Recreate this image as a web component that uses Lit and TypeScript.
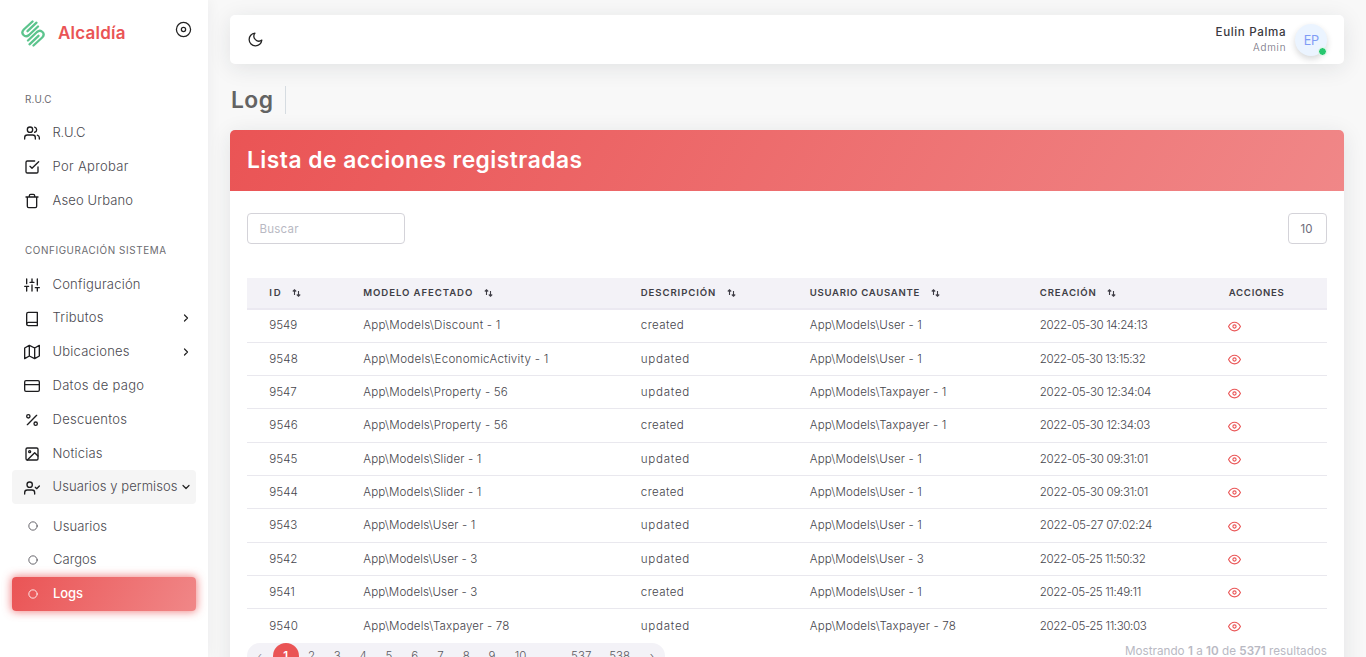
import { LitElement, html, svg, css, nothing } from "lit";
import { customElement, property } from "lit/decorators.js";

/** Single line of text whose tracking is adjusted to fill a given width. */
@customElement("fit-text")
class FitText extends LitElement {
  @property({ type: Number }) w = 0;
  static styles = css`
    :host { display: inline-block; white-space: nowrap; }
  `;
  render() {
    return html`<slot></slot>`;
  }
  firstUpdated() {
    const n = (this.textContent || "").trim().length;
    if (!this.w || n < 2) return;
    this.style.letterSpacing = "0px";
    const natural = this.getBoundingClientRect().width;
    this.style.letterSpacing = `${(this.w - natural) / (n - 1)}px`;
    this.style.width = `${this.w}px`;
  }
}

const ICONS: Record<string, unknown> = {
  users: svg`<path d="M17 21v-2a4 4 0 0 0-4-4H5a4 4 0 0 0-4 4v2"/><circle cx="9" cy="7" r="4"/><path d="M23 21v-2a4 4 0 0 0-3-3.87M16 3.13a4 4 0 0 1 0 7.75"/>`,
  check: svg`<path d="M9 11l3 3L22 4"/><path d="M21 12v7a2 2 0 0 1-2 2H5a2 2 0 0 1-2-2V5a2 2 0 0 1 2-2h11"/>`,
  trash: svg`<path d="M3 6h18M19 6v14a2 2 0 0 1-2 2H7a2 2 0 0 1-2-2V6m3 0V4a2 2 0 0 1 2-2h4a2 2 0 0 1 2 2v2"/>`,
  sliders: svg`<path d="M4 21v-7M4 10V3M12 21v-9M12 8V3M20 21v-5M20 12V3M1 14h6M9 8h6M17 16h6"/>`,
  book: svg`<path d="M4 19.5A2.5 2.5 0 0 1 6.5 17H20"/><path d="M6.5 2H20v20H6.5A2.5 2.5 0 0 1 4 19.5v-15A2.5 2.5 0 0 1 6.5 2z"/>`,
  map: svg`<path d="M1 6v16l7-4 8 4 7-4V2l-7 4-8-4-7 4zM8 2v16M16 6v16"/>`,
  card: svg`<rect x="1" y="4" width="22" height="16" rx="2"/><path d="M1 10h22"/>`,
  percent: svg`<path d="M19 5L5 19"/><circle cx="6.5" cy="6.5" r="2.5"/><circle cx="17.5" cy="17.5" r="2.5"/>`,
  image: svg`<rect x="3" y="3" width="18" height="18" rx="2"/><circle cx="8.5" cy="8.5" r="1.5"/><path d="M21 15l-5-5L5 21"/>`,
  usercheck: svg`<path d="M16 21v-2a4 4 0 0 0-4-4H5a4 4 0 0 0-4 4v2"/><circle cx="8.5" cy="7" r="4"/><path d="M17 11l2 2 4-4"/>`,
  circle: svg`<circle cx="12" cy="12" r="10"/>`,
  disc: svg`<circle cx="12" cy="12" r="10"/><circle cx="12" cy="12" r="3"/>`,
  moon: svg`<path d="M21 12.79A9 9 0 1 1 11.21 3 7 7 0 0 0 21 12.79z"/>`,
  right: svg`<path d="M9 18l6-6-6-6"/>`,
  down: svg`<path d="M6 9l6 6 6-6"/>`,
  eye: svg`<path d="M1 12s4-8 11-8 11 8 11 8-4 8-11 8-11-8-11-8z"/><circle cx="12" cy="12" r="3"/>`,
};
const icon = (name: string, cls = "i16") =>
  html`<svg class="ico ${cls}" viewBox="0 0 24 24">${ICONS[name]}</svg>`;

type Item = [string, string, number, string?];
const RUC: Item[] = [
  ["users", "R.U.C", 33],
  ["check", "Por Aprobar", 76],
  ["trash", "Aseo Urbano", 80.5],
];
const SYSTEM: Item[] = [
  ["sliders", "Configuración", 88],
  ["book", "Tributos", 51, "right"],
  ["map", "Ubicaciones", 77, "right"],
  ["card", "Datos de pago", 91.5],
  ["percent", "Descuentos", 74.5],
  ["image", "Noticias", 50],
  ["usercheck", "Usuarios y permisos", 125, "down"],
];
const SUB: Item[] = [
  ["circle", "Usuarios", 54],
  ["circle", "Cargos", 43.5],
  ["circle", "Logs", 30],
];
const HEAD: [string, number, boolean][] = [
  ["ID", 11.5, true],
  ["MODELO AFECTADO", 109, true],
  ["DESCRIPCIÓN", 74.5, true],
  ["USUARIO CAUSANTE", 109.5, true],
  ["CREACIÓN", 56, true],
  ["ACCIONES", 55, false],
];
type Cell = [string, number];
const UPD: Cell = ["updated", 48.5];
const CRE: Cell = ["created", 43];
const U1: Cell = ["App\\Models\\User - 1", 112];
const U3: Cell = ["App\\Models\\User - 3", 114];
const T1: Cell = ["App\\Models\\Taxpayer - 1", 136.5];
const T78: Cell = ["App\\Models\\Taxpayer - 78", 146];
const P56: Cell = ["App\\Models\\Property - 56", 144.5];
const SL: Cell = ["App\\Models\\Slider - 1", 118];
const ROWS: Cell[][] = [
  [["9549", 28], ["App\\Models\\Discount - 1", 137], CRE, U1, ["2022-05-30 14:24:13", 108]],
  [["9548", 28.5], ["App\\Models\\EconomicActivity - 1", 185], UPD, U1, ["2022-05-30 13:15:32", 106]],
  [["9547", 27.5], P56, UPD, T1, ["2022-05-30 12:34:04", 111.5]],
  [["9546", 28.5], P56, CRE, T1, ["2022-05-30 12:34:03", 110.5]],
  [["9545", 28], SL, UPD, U1, ["2022-05-30 09:31:01", 108.5]],
  [["9544", 28.5], SL, CRE, U1, ["2022-05-30 09:31:01", 108.5]],
  [["9543", 28], U1, UPD, U1, ["2022-05-27 07:02:24", 112.5]],
  [["9542", 28], U3, UPD, U3, ["2022-05-25 11:50:32", 106]],
  [["9541", 25.5], U3, CRE, U1, ["2022-05-25 11:49:11", 101.5]],
  [["9540", 28.5], T78, UPD, T78, ["2022-05-25 11:30:03", 107]],
];
const PAGES = ["1", "2", "3", "4", "5", "6", "7", "8", "9", "10", "...", "537", "538"];

@customElement("app-root")
class AppRoot extends LitElement {
  static styles = css`
    :host {
      display: flex; height: 657px; overflow: hidden; background: #f8f8f8;
      font-family: Inter, "Open Sans", sans-serif; color: #5a5960; font-size: 11.6px;
    }
    * { box-sizing: border-box; }
    .ico { display: block; fill: none; stroke: currentColor; stroke-width: 2; stroke-linecap: round; stroke-linejoin: round; flex: none; }
    .i16 { width: 16px; height: 16px; }
    .i12 { width: 12px; height: 12px; }
    .i13 { width: 13px; height: 13px; }
    .i10 { width: 10px; height: 10px; }
    .i17 { width: 17px; height: 17px; stroke-width: 1.8; }

    .side { width: 208px; flex: none; background: #fff; box-shadow: 0 0 14px rgba(34, 41, 47, .06); padding: 0 12px; }
    .brand { height: 83px; display: flex; align-items: flex-start; padding: 20px 4px 0 9px; }
    .logo { width: 24px; height: 27px; display: block; }
    .name { font-size: 17px; font-weight: 600; line-height: 27px; color: #ea5455; margin-left: 13px; flex: 1; }
    .disc { color: #222; margin-top: 1px; }
    .label { height: 33px; padding-left: 13px; font-size: 9.9px; line-height: 33px; color: #6b6b70; }
    .gap { height: 17px; }
    .item { height: 33.8px; display: flex; align-items: center; padding: 0 4px 0 12px; border-radius: 4px; font-size: 13px; font-weight: 300; color: #4a4950; }
    .item .i16 { color: #1d1d1f; margin-top: 1px; }
    .item .i10 { margin: 0 2.5px 0 3.5px; }
    .item .text { margin-left: 12.5px; flex: 1; line-height: 16px; padding-bottom: 1.4px; }
    .item .i12 { color: #222; stroke-width: 2.4; }
    .item.open { background: #f5f5f5; }
    .sub { padding-top: 5.5px; }
    .sub .text { margin-left: 13px; }
    .item.active { color: #fff; font-weight: 500; background: linear-gradient(118deg, #ea5455, rgba(234, 84, 85, .7)); box-shadow: 0 0 9px 1px rgba(234, 84, 85, .7); }

    .main { flex: 1; min-width: 0; padding: 15px 22px 0; display: flex; flex-direction: column; }
    .top { height: 49px; flex: none; background: #fff; border-radius: 5px; box-shadow: 0 4px 22px rgba(34, 41, 47, .1); display: flex; align-items: center; padding: 0 17px; }
    .moon { color: #222; flex: none; }
    .who { margin-left: auto; text-align: right; display: flex; flex-direction: column; align-items: flex-end; padding-bottom: 1px; }
    .user { font-size: 11.6px; font-weight: 500; line-height: 16px; color: #3a3940; }
    .role { font-size: 9.9px; font-weight: 300; line-height: 15px; color: #6e6b7b; }
    .avatar { position: relative; width: 32px; height: 32px; margin-left: 9.5px; border-radius: 50%; background: #ebf4ff; color: #7f9cf5; font: 14px/32px "Open Sans", sans-serif; text-align: center; box-shadow: 0 3px 6px rgba(34, 41, 47, .18); margin-top: 1px; letter-spacing: -.5px; }
    .dot { position: absolute; right: 0; bottom: 0; width: 9px; height: 9px; border-radius: 50%; background: #28c76f; border: 1px solid #fff; }

    .title { height: 66px; flex: none; display: flex; align-items: center; padding: 6px 0 0 1px; }
    .log { font-size: 22.8px; font-weight: 600; color: #636363; line-height: 28px; padding-right: 12px; border-right: 1px solid #d6dce1; }
    .card { flex: none; height: 600px; background: #fff; border-radius: 5px; box-shadow: 0 4px 22px rgba(34, 41, 47, .1); }
    .cardhead { height: 61px; border-radius: 5px 5px 0 0; padding-left: 17px; line-height: 60px; font-size: 22.8px; font-weight: 600; color: #fff; background: linear-gradient(118deg, #ea5455, rgba(234, 84, 85, .7)); }
    .body { padding: 22px 17px 0; }
    .tools { display: flex; justify-content: space-between; height: 65px; align-items: flex-start; }
    .box { height: 31px; border: 1px solid #d4d3d9; border-radius: 4px; line-height: 30px; padding: 0 11.5px; color: #6e6b7b; font-size: 11.5px; font-weight: 300; }
    .search { width: 158px; color: #b9b9c3; font-weight: 400; }
    .size { width: 39px; font-weight: 400; }
    .row { display: grid; grid-template-columns: 94px 277.5px 169px 230px 189px 1fr; padding: 0 0 .6px 22.3px; height: 33.3px; align-items: center; border-bottom: 1px solid #e9e8ee; font-weight: 300; color: #46454c; }
    .row:last-child { border-bottom: 0; }
    .head { height: 31.6px; padding-bottom: 1.6px; background: #f3f2f7; border-bottom: 2px solid #ebe9f1; font-size: 9.6px; font-weight: 600; color: #3f3e46; }
    .cell { display: flex; align-items: center; }
    .sort { width: 9px; height: 8px; margin: 1px 0 0 11.5px; display: block; fill: none; stroke: currentColor; stroke-width: 1.1; }
    .eye { color: #ea5455; padding-top: 2px; margin-left: -1px; }
    .foot { display: flex; justify-content: space-between; align-items: flex-start; }
    .pages { display: flex; height: 26px; background: #f3f2f7; border-radius: 13px; line-height: 26px; font-size: 11.5px; font-weight: 300; text-align: center; width: 418px; }
    .pg { width: 25.8px; flex: none; }
    .pg.mid { width: 31px; }
    .pg.wide { width: 38.5px; }
    .pg.dots { line-height: 32px; width: 26px; }
    .pg.on { background: #ea5455; color: #fff; border-radius: 50%; font-weight: 600; }
    .pg.arrow { color: #8a8894; }
    .sum { color: #b9b9c3; font-size: 11.7px; line-height: 16px; }
    .sum b { font-weight: 600; }
  `;

  item([ic, label, w, arrow]: Item, cls = "") {
    return html`<div class="item ${cls}">
      ${icon(ic, ic === "circle" ? "i10" : "i16")}
      <span class="text"><fit-text w=${w}>${label}</fit-text></span>
      ${arrow ? icon(arrow, "i12") : nothing}
    </div>`;
  }

  page(p: string) {
    const kind = p === "1" ? "on" : p === "..." ? "dots" : p === "10" ? "mid" : p.length === 3 ? "wide" : "";
    return html`<span class="pg ${kind}">${p}</span>`;
  }

  render() {
    return html`
      <nav class="side">
        <div class="brand">
          <svg class="logo" viewBox="0 0 24 27" fill="none" stroke="#5cc48d" stroke-width="2.3" stroke-linecap="round" stroke-linejoin="round">
            <path d="M11.5 1.500L2.800 9.500Q0 12.500 2.500 15Q5 17.500 8 15L17 6.500"/>
            <path d="M15.500 2.700L6.500 11.200"/>
            <path d="M12.500 25.500L21.200 17.500Q24 14.500 21.500 12Q19 9.500 16 12L7 20.500"/>
            <path d="M8.500 24.300L17.500 15.800"/>
          </svg>
          <span class="name"><fit-text w="67.5">Alcaldía</fit-text></span>
          <span class="disc">${icon("disc", "i17")}</span>
        </div>
        <div class="label"><fit-text w="26.5">R.U.C</fit-text></div>
        ${RUC.map((i) => this.item(i))}
        <div class="gap"></div>
        <div class="label"><fit-text w="141">CONFIGURACIÓN SISTEMA</fit-text></div>
        ${SYSTEM.map((i) => this.item(i, i[3] === "down" ? "open" : ""))}
        <div class="sub">${SUB.map((i) => this.item(i, i[1] === "Logs" ? "active" : ""))}</div>
      </nav>
      <main class="main">
        <header class="top">
          <span class="moon">${icon("moon", "i17")}</span>
          <div class="who">
            <fit-text class="user" w="70">Eulin Palma</fit-text>
            <fit-text class="role" w="32.5">Admin</fit-text>
          </div>
          <div class="avatar">EP<span class="dot"></span></div>
        </header>
        <div class="title"><span class="log"><fit-text w="42">Log</fit-text></span></div>
        <section class="card">
          <div class="cardhead"><fit-text w="335">Lista de acciones registradas</fit-text></div>
          <div class="body">
            <div class="tools">
              <div class="box search"><fit-text w="39">Buscar</fit-text></div>
              <div class="box size"><fit-text w="12">10</fit-text></div>
            </div>
            <div class="row head">
              ${HEAD.map(([t, w, s]) => html`<div class="cell"><fit-text w=${w}>${t}</fit-text>
                ${s ? html`<svg class="sort" viewBox="0 0 9 8"><path d="M2.5 6V.8M.8 2.5L2.5.8l1.700 1.700M6.500 2v5.200M4.800 5.500l1.700 1.700 1.700-1.700"/></svg>` : nothing}</div>`)}
            </div>
            <div>
              ${ROWS.map((r) => html`<div class="row">
                ${r.map(([t, w]) => html`<div class="cell"><fit-text w=${w}>${t}</fit-text></div>`)}
                <div class="cell eye">${icon("eye", "i13")}</div>
              </div>`)}
            </div>
            <div class="foot">
              <div class="pages">
                <span class="pg arrow">‹</span>
                ${PAGES.map((p) => this.page(p))}
                <span class="pg">›</span>
              </div>
              <fit-text class="sum" w="202">Mostrando <b>1</b> a <b>10</b> de <b>5371</b> resultados</fit-text>
            </div>
          </div>
        </section>
      </main>
    `;
  }
}
